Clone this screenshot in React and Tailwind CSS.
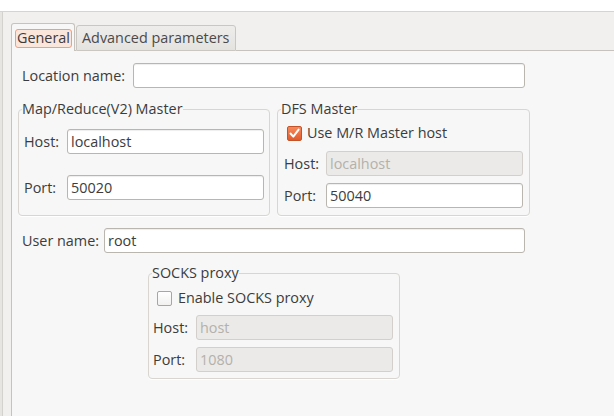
import React from "react";

function Field({ w, value, disabled }) {
  return (
    <div
      className={`h-[25px] ${w} shrink-0 flex items-center pl-[3px] rounded-[3px] border whitespace-nowrap overflow-hidden ${
        disabled
          ? "border-[#d3d0cb] bg-[#ebeae8] text-[#b4b1ab]"
          : "border-[#b9b5af] bg-white text-[#3c3c3c] shadow-[inset_0_1px_1px_rgba(0,0,0,0.07)]"
      }`}
    >
      {value}
    </div>
  );
}

function Check({ checked }) {
  return checked ? (
    <div className="w-[15px] h-[15px] shrink-0 rounded-[2px] border border-[#c4532a] bg-gradient-to-b from-[#f58a5c] to-[#e05a2b] flex items-center justify-center">
      <svg width="13" height="13" viewBox="0 0 13 13">
        <path d="M2.5 6.5 L5.3 9.6 L10.6 2.6" fill="none" stroke="white" strokeWidth="2" strokeLinecap="round" strokeLinejoin="round" />
      </svg>
    </div>
  ) : (
    <div className="w-[15px] h-[15px] shrink-0 rounded-[2px] border border-[#a9a5a0] bg-gradient-to-b from-white to-[#f2f1f0]" />
  );
}

function Frame({ title, w, children }) {
  return (
    <fieldset className={`${w} shrink-0 border border-[#d9d6d1] rounded-[4px] p-0 m-0 min-w-0 shadow-[0_1px_0_white]`}>
      <legend className="ml-[3px] p-0 h-[18px] leading-[18px] text-[#3c3c3c]">{title}</legend>
      {children}
    </fieldset>
  );
}

export default function App() {
  return (
    <div className="w-[614px] h-[416px] overflow-hidden bg-white font-['Open_Sans',sans-serif] text-[14.4px] text-[#3c3c3c] flex flex-col">
      <div className="h-[11px] shrink-0 bg-white" />
      <div className="flex-1 flex border-t border-[#d6d4d0] bg-[#f1f0ef]">
        {/* left window edge */}
        <div className="w-[3px] shrink-0 bg-[#e6e5e2] border-r border-[#d4d2ce]" />
        <div className="w-[8px] shrink-0" />
        {/* notebook */}
        <div className="flex-1 flex flex-col">
          <div className="h-[39px] shrink-0 flex items-end">
            <div className="w-[64px] h-[28px] shrink-0 border border-b-0 border-[#c6c3be] rounded-t-[3px] bg-[#f7f7f7] pl-[3px] pt-[5px]">
              <div className="w-[57px] h-[19px] rounded-[3px] border border-[#ef9e7e] bg-[#fbe6dc] flex items-center pl-[1px] leading-none text-[#3c3c3c]">
                General
              </div>
            </div>
            <div className="w-[1px] h-full shrink-0 border-b border-[#c6c3be]" />
            <div className="w-[160px] h-[26px] shrink-0 border border-[#cac7c2] rounded-t-[3px] bg-gradient-to-b from-[#eeedeb] to-[#e4e3e0] flex items-center pl-[5px] text-[#4a4a4a] whitespace-nowrap">
              Advanced parameters
            </div>
            <div className="flex-1 h-full border-b border-[#c6c3be]" />
          </div>
          {/* pane */}
          <div className="flex-1 border-l border-[#c6c3be] bg-[#f7f7f7] pl-[6px] pt-[12px]">
            <div className="w-[512px] flex flex-col">
              {/* location */}
              <div className="flex items-center pl-[4px]">
                <div className="w-[111px] shrink-0 whitespace-nowrap">Location name:</div>
                <Field w="w-[392px]" value="" />
              </div>

              {/* masters */}
              <div className="flex items-stretch gap-[7px] mt-[12px]">
                <Frame title="Map/Reduce(V2) Master" w="w-[252px]">
                  <div className="pl-[5px] pr-[5px] pt-[11px] pb-[15px] flex flex-col gap-[21px]">
                    <div className="flex items-center">
                      <div className="w-[43px] shrink-0">Host:</div>
                      <Field w="w-[197px]" value="localhost" />
                    </div>
                    <div className="flex items-center">
                      <div className="w-[43px] shrink-0">Port:</div>
                      <Field w="w-[197px]" value="50020" />
                    </div>
                  </div>
                </Frame>
                <Frame title="DFS Master" w="w-[253px]">
                  <div className="pl-[6px] pr-[6px] pt-[6px] pb-[7px] flex flex-col">
                    <div className="h-[18px] flex items-center pl-[3px] gap-[5px] whitespace-nowrap">
                      <Check checked />
                      <span>Use M/R Master host</span>
                    </div>
                    <div className="flex items-center mt-[9px]">
                      <div className="w-[42px] shrink-0">Host:</div>
                      <Field w="w-[197px]" value="localhost" disabled />
                    </div>
                    <div className="flex items-center mt-[7px]">
                      <div className="w-[42px] shrink-0">Port:</div>
                      <Field w="w-[197px]" value="50040" />
                    </div>
                  </div>
                </Frame>
              </div>

              {/* user name */}
              <div className="flex items-center pl-[4px] mt-[12px]">
                <div className="w-[82px] shrink-0 whitespace-nowrap">User name:</div>
                <Field w="w-[421px]" value="root" />
              </div>

              {/* socks */}
              <div className="mt-[11px] flex justify-center">
                <Frame title="SOCKS proxy" w="w-[252px]">
                  <div className="pl-[4px] pr-[6px] pt-[7px] pb-[6px] flex flex-col">
                    <div className="h-[18px] flex items-center pl-[4px] gap-[6px] whitespace-nowrap">
                      <Check />
                      <span>Enable SOCKS proxy</span>
                    </div>
                    <div className="flex items-center mt-[8px]">
                      <div className="w-[43px] shrink-0">Host:</div>
                      <Field w="w-[197px]" value="host" disabled />
                    </div>
                    <div className="flex items-center mt-[7px]">
                      <div className="w-[43px] shrink-0">Port:</div>
                      <Field w="w-[197px]" value="1080" disabled />
                    </div>
                  </div>
                </Frame>
              </div>
            </div>
          </div>
        </div>
      </div>
    </div>
  );
}
